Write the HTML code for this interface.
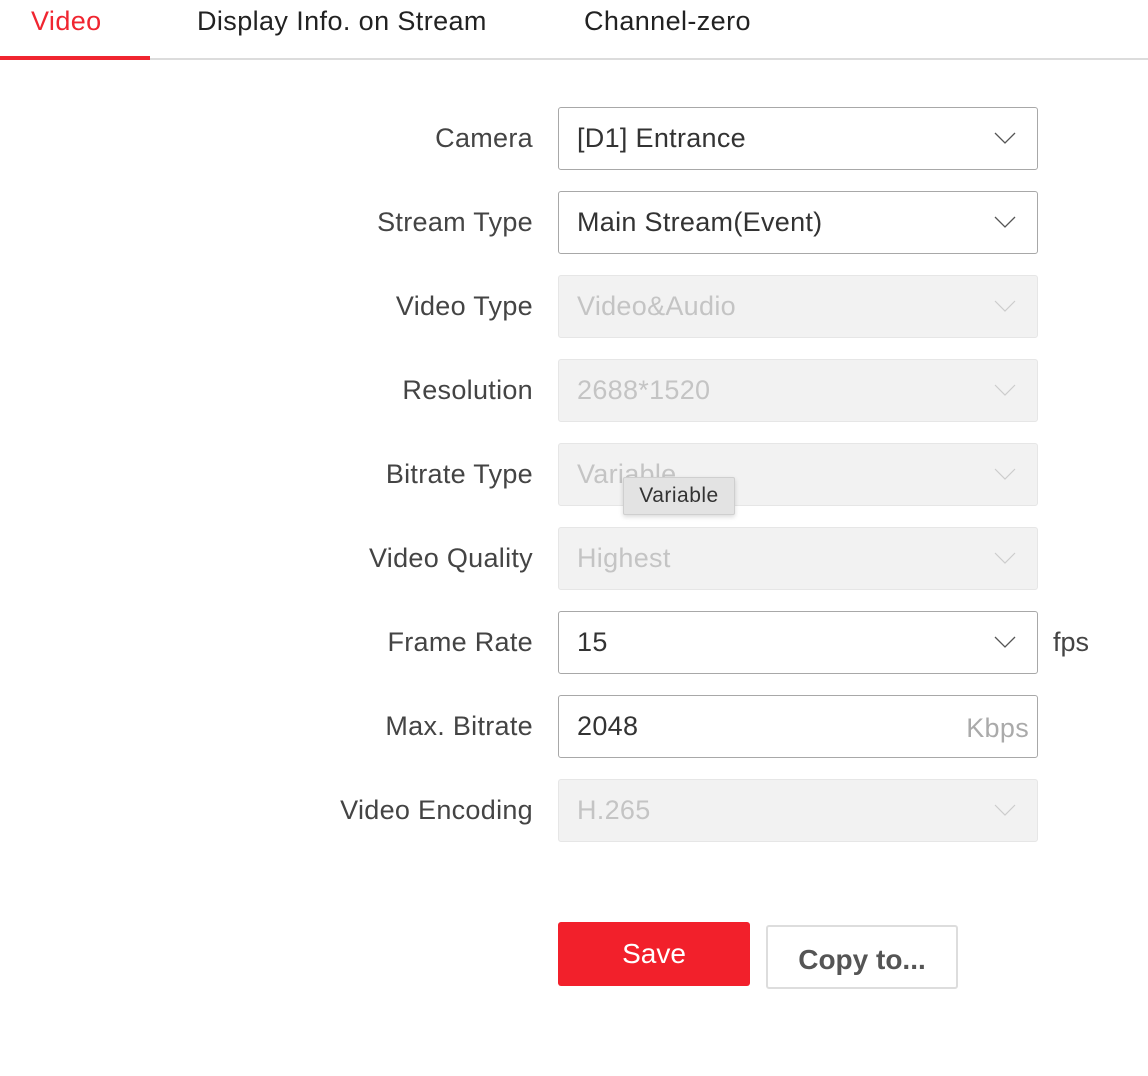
<!DOCTYPE html>
<html><head><meta charset="utf-8"><style>
*{margin:0;padding:0;box-sizing:border-box}
body{width:1148px;height:1076px;background:#fff;font-family:"Liberation Sans",Arial,sans-serif;position:relative;overflow:hidden;color:#333}
.tab{position:absolute;top:4px;font-size:27px;letter-spacing:0.4px;line-height:34px;color:#222}
.lbl{position:absolute;right:615px;font-size:27px;letter-spacing:0.3px;line-height:62px;color:#444;white-space:nowrap}
.box{position:absolute;left:558px;width:480px;height:63px;border:1.5px solid #a8a8a8;border-radius:3px;font-size:27px;letter-spacing:0.3px;line-height:60px;padding-left:18px;color:#333}
.box.dis{background:#f2f2f2;border:1px solid #e6e6e6;color:#c4c4c4}
.box svg{position:absolute;right:21px;top:24px}
</style></head><body>
<div class="tab" style="left:31px;color:#f02530">Video</div>
<div class="tab" style="left:197px">Display Info. on Stream</div>
<div class="tab" style="left:584px">Channel-zero</div>
<div style="position:absolute;left:0;top:58px;width:1148px;height:2px;background:#dcdcdc"></div>
<div style="position:absolute;left:0;top:56px;width:150px;height:4px;background:#f02530"></div>

<div class="lbl" style="top:107px">Camera</div>
<div class="box" style="top:107px">[D1] Entrance<svg width="22" height="13" viewBox="0 0 22 13"><path d="M1 1L11 11L21 1" fill="none" stroke="#555" stroke-width="1.3"/></svg></div>

<div class="lbl" style="top:191px">Stream Type</div>
<div class="box" style="top:191px">Main Stream(Event)<svg width="22" height="13" viewBox="0 0 22 13"><path d="M1 1L11 11L21 1" fill="none" stroke="#555" stroke-width="1.3"/></svg></div>

<div class="lbl" style="top:275px">Video Type</div>
<div class="box dis" style="top:275px">Video&amp;Audio<svg width="22" height="13" viewBox="0 0 22 13"><path d="M1 1L11 11L21 1" fill="none" stroke="#ccc" stroke-width="1.2"/></svg></div>

<div class="lbl" style="top:359px">Resolution</div>
<div class="box dis" style="top:359px">2688*1520<svg width="22" height="13" viewBox="0 0 22 13"><path d="M1 1L11 11L21 1" fill="none" stroke="#ccc" stroke-width="1.2"/></svg></div>

<div class="lbl" style="top:443px">Bitrate Type</div>
<div class="box dis" style="top:443px">Variable<svg width="22" height="13" viewBox="0 0 22 13"><path d="M1 1L11 11L21 1" fill="none" stroke="#ccc" stroke-width="1.2"/></svg></div>

<div class="lbl" style="top:527px">Video Quality</div>
<div class="box dis" style="top:527px">Highest<svg width="22" height="13" viewBox="0 0 22 13"><path d="M1 1L11 11L21 1" fill="none" stroke="#ccc" stroke-width="1.2"/></svg></div>

<div class="lbl" style="top:611px">Frame Rate</div>
<div class="box" style="top:611px">15<svg width="22" height="13" viewBox="0 0 22 13"><path d="M1 1L11 11L21 1" fill="none" stroke="#555" stroke-width="1.3"/></svg></div>
<div style="position:absolute;left:1053px;top:611px;font-size:27px;line-height:62px;color:#444">fps</div>

<div class="lbl" style="top:695px">Max. Bitrate</div>
<div class="box" style="top:695px">2048<span style="position:absolute;right:8px;top:2px;color:#aaa">Kbps</span></div>

<div class="lbl" style="top:779px">Video Encoding</div>
<div class="box dis" style="top:779px">H.265<svg width="22" height="13" viewBox="0 0 22 13"><path d="M1 1L11 11L21 1" fill="none" stroke="#ccc" stroke-width="1.2"/></svg></div>

<div style="position:absolute;left:623px;top:477px;width:112px;height:38px;background:#e3e3e3;border:1px solid #cfcfcf;border-radius:2px;box-shadow:0 2px 5px rgba(0,0,0,.15);font-size:21px;letter-spacing:0.5px;line-height:36px;text-align:center;color:#333">Variable</div>

<div style="position:absolute;left:558px;top:922px;width:192px;height:64px;background:#f2202b;border-radius:3px;color:#fff;font-size:28px;line-height:64px;text-align:center">Save</div>
<div style="position:absolute;left:766px;top:925px;width:192px;height:64px;border:2px solid #ddd;border-radius:3px;color:#555;font-size:28px;font-weight:bold;line-height:66px;text-align:center">Copy to...</div>
</body></html>
